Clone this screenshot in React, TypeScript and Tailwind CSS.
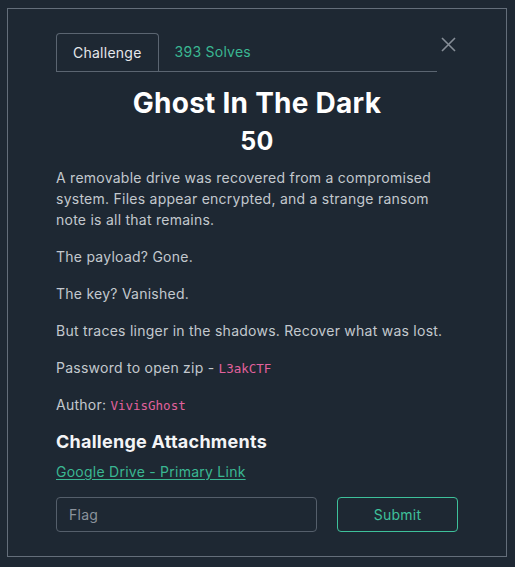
export default function App() {
  const paragraphs = [
    "A removable drive was recovered from a compromised system. Files appear encrypted, and a strange ransom note is all that remains.",
    "The payload? Gone.",
    "The key? Vanished.",
    "But traces linger in the shadows. Recover what was lost.",
  ];

  return (
    <div className="min-h-[567px] bg-[#1e2833] pl-[7px] pt-2 font-['Inter',sans-serif] tracking-[0.25px]">
      <div className="flex h-[549px] w-[500px] flex-col border border-[#646e7a] bg-[#1e2833] px-12 pt-6">
        {/* header with tabs */}
        <div className="flex items-start">
          <div className="flex flex-1 border-b border-[#5b6571]">
            <div className="-mb-px flex h-[38px] items-center rounded-t-[4px] border border-b-0 border-[#5b6571] bg-[#1e2833] px-4 text-sm text-[#e5e7eb]">
              Challenge
            </div>
            <div className="flex h-[38px] items-center px-4 text-sm text-[#3ab792]">393 Solves</div>
          </div>
          <button className="flex w-[21px] justify-start pl-1 pt-1 text-[#868e97]">
            <svg width="15" height="15" viewBox="0 0 15 15" fill="none" stroke="currentColor" strokeWidth="1.6">
              <path d="M1 1l13 13M14 1L1 14" />
            </svg>
          </button>
        </div>

        <h1 className="mt-[13px] text-center text-[28px] font-bold leading-[36px] text-white">
          Ghost In The Dark
        </h1>
        <div className="mt-[5px] text-center text-[25px] font-bold leading-[30px] text-white">50</div>

        <div className="mt-[11px] flex flex-col gap-4 text-sm leading-[21px] text-[#c3c8ce]">
          {paragraphs.map((p) => (
            <p key={p}>{p}</p>
          ))}
          <p>
            Password to open zip -{" "}
            <code className="font-['DejaVu_Sans_Mono',monospace] text-[12.5px] leading-none tracking-normal text-[#e2619d]">
              L3akCTF
            </code>
          </p>
          <p>
            Author:{" "}
            <code className="font-['DejaVu_Sans_Mono',monospace] text-[12.5px] leading-none tracking-normal text-[#e2619d]">
              VivisGhost
            </code>
          </p>
        </div>

        <h2 className="mt-[15px] text-lg font-bold leading-[24px] text-[#f3f4f6]">Challenge Attachments</h2>
        <a className="mt-[7px] text-sm leading-[21px] text-[#3ab792] underline underline-offset-2" href="#">
          Google Drive - Primary Link
        </a>

        <div className="mt-[15px] flex gap-5">
          <input
            className="h-[35px] w-[261px] rounded-[4px] border border-[#555f6b] bg-transparent px-3 text-sm text-white placeholder:text-[#8b939c] outline-none"
            placeholder="Flag"
          />
          <button className="h-[35px] flex-1 rounded-[4px] border border-[#3ec19b] text-sm text-[#3ec19b]">
            Submit
          </button>
        </div>
      </div>
    </div>
  );
}
